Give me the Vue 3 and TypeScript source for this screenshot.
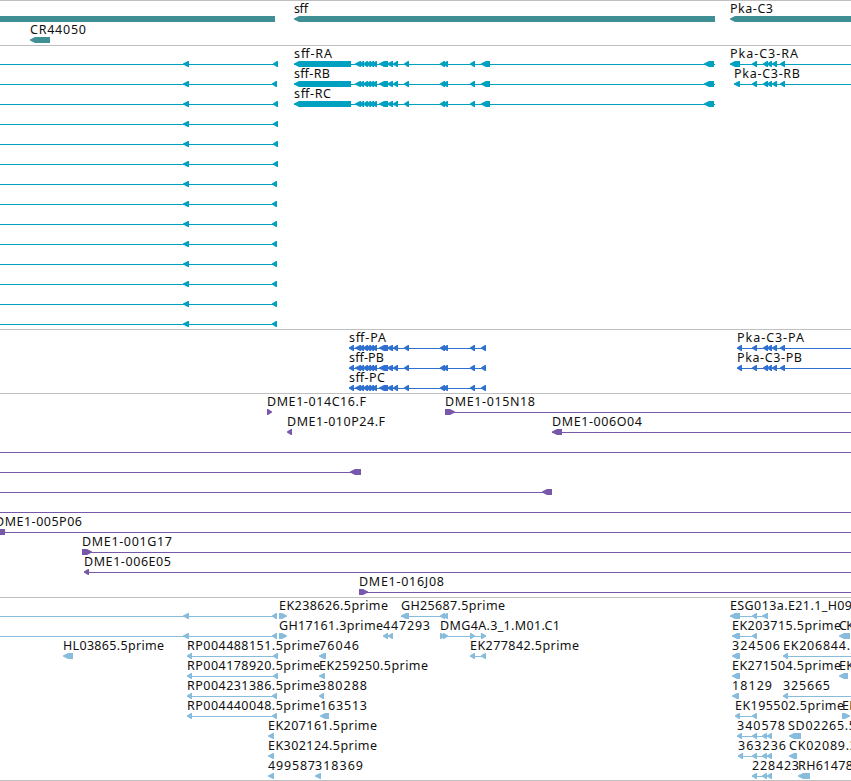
<template>
  <main class="browser">
    <section
      v-for="track in tracks"
      :key="track.id"
      class="browser__track"
      :class="`browser__track--${track.id}`"
    >
      <svg class="browser__canvas" :width="viewWidth" :height="track.height">
        <g v-for="(feature, index) in track.features" :key="index">
          <rect
            v-if="feature.line"
            class="browser__line"
            :x="feature.line[0]"
            :y="feature.y"
            :width="feature.line[1] - feature.line[0]"
            height="1"
          />
          <path
            v-for="(block, blockIndex) in feature.blocks"
            :key="blockIndex"
            class="browser__block"
            :d="blockPath(block, feature.y, feature.strand)"
          />
        </g>
        <g v-for="(feature, index) in track.features" :key="`label-${index}`">
          <text
            v-if="feature.label"
            class="browser__label"
            :x="feature.label.x"
            :y="feature.y - 6"
            :textLength="feature.label.width"
          >{{ feature.label.text }}</text>
        </g>
      </svg>
    </section>
  </main>
</template>

<script setup lang="ts">
type Span = [number, number]
type Strand = 'minus' | 'plus' | 'none'

interface Label {
  text: string
  x: number
  width: number
}

interface Feature {
  y: number
  strand: Strand
  blocks: Span[]
  line?: Span
  label?: Label
}

interface Track {
  id: string
  height: number
  features: Feature[]
}

const viewWidth = 851
const rowHeight = 20
const firstRow = 18

const rowY = (row: number) => firstRow + row * rowHeight

const label = (text: string, x: number, end: number): Label => ({ text, x, width: end - x })

const feature = (
  row: number,
  blocks: Span[],
  name?: Label,
  line?: Span,
  strand: Strand = 'minus'
): Feature => ({ y: rowY(row), strand, blocks, line, label: name })

// Block with an arrow head on the side given by the strand
const blockPath = ([start, end]: Span, y: number, strand: Strand) => {
  const head = Math.min(5, end - start - 1)
  if (strand === 'none') {
    return `M${start} ${y - 3}H${end}V${y + 3}H${start}Z`
  }
  if (strand === 'plus') {
    return `M${start} ${y - 3}H${end - head}L${end} ${y - 0.5}V${y + 0.5}L${end - head} ${y + 3}H${start}Z`
  }
  return `M${end} ${y - 3}H${start + head}L${start} ${y - 0.5}V${y + 0.5}L${start + head} ${y + 3}H${end}Z`
}

// Exons shared by the sff transcripts and proteins
const sffExons: Span[] = [
  [355, 361], [359, 364], [363, 368], [366, 371], [369, 374], [372, 377],
  [379, 388], [387, 393], [393, 398], [404, 409], [440, 445], [443, 448], [470, 475]
]
const pkaExons: Span[] = [[752, 757], [763, 768], [767, 772], [772, 777], [780, 785]]

const sffTranscript = (row: number, name: string, end: number) =>
  feature(row, [[294, 351], ...sffExons, [481, 490], [704, 714]], label(name, 294, end), [294, 715])

const sffProtein = (row: number, name: string, end: number) =>
  feature(row, [[349, 354], ...sffExons, [481, 486]], label(name, 349, end), [349, 486])

// Unlabelled transcripts running in from the left edge
const leftEnds = [278, 277, 278, 278, 278, 278, 277, 277, 277, 277, 277, 277, 277, 277]

const genes: Feature[] = [
  { y: 18, strand: 'none', blocks: [[0, 275]] },
  { y: 18, strand: 'minus', blocks: [[294, 715]], label: label('sff', 294, 308) },
  { y: 18, strand: 'minus', blocks: [[730, 860]], label: label('Pka-C3', 730, 773) },
  { y: 39, strand: 'minus', blocks: [[30, 50]], label: label('CR44050', 30, 86) }
]

const transcripts: Feature[] = [
  ...leftEnds.map((end, row) => feature(row, [[183, 189], [end - 5, end]], undefined, [0, end])),
  sffTranscript(0, 'sff-RA', 332),
  sffTranscript(1, 'sff-RB', 330),
  sffTranscript(2, 'sff-RC', 331),
  feature(0, [[730, 740], ...pkaExons], label('Pka-C3-RA', 730, 798), [730, 851]),
  feature(1, [[734, 740], ...pkaExons], label('Pka-C3-RB', 734, 800), [734, 851])
]

const proteins: Feature[] = [
  sffProtein(0, 'sff-PA', 386),
  sffProtein(1, 'sff-PB', 384),
  sffProtein(2, 'sff-PC', 385),
  feature(0, [[737, 742], ...pkaExons], label('Pka-C3-PA', 737, 804), [737, 851]),
  feature(1, [[737, 742], ...pkaExons], label('Pka-C3-PB', 737, 802), [737, 851])
]

const clones: Feature[] = [
  feature(0, [[267, 272]], label('DME1-014C16.F', 267, 366), undefined, 'plus'),
  feature(0, [[445, 455]], label('DME1-015N18', 445, 535), [445, 851], 'plus'),
  feature(1, [[287, 292]], label('DME1-010P24.F', 287, 385)),
  feature(1, [[552, 562]], label('DME1-006O04', 552, 642), [552, 851]),
  feature(2, [], undefined, [0, 851]),
  feature(3, [[350, 361]], undefined, [0, 361]),
  feature(4, [[542, 552]], undefined, [0, 552]),
  feature(5, [], undefined, [0, 851]),
  feature(6, [[0, 5]], label('DME1-005P06', -5, 82), [0, 851], 'none'),
  feature(7, [[82, 92]], label('DME1-001G17', 82, 172), [82, 851], 'plus'),
  feature(8, [[84, 89]], label('DME1-006E05', 84, 171), [84, 851]),
  feature(9, [[359, 368]], label('DME1-016J08', 359, 444), [359, 851], 'plus')
]

const ests: Feature[] = [
  feature(0, [[183, 189], [272, 277]], undefined, [0, 277]),
  feature(0, [[279, 287]], label('EK238626.5prime', 279, 388), undefined, 'plus'),
  feature(0, [[401, 409], [440, 445], [443, 448]], label('GH25687.5prime', 401, 505), [401, 448]),
  feature(0, [[730, 740], [752, 757], [762, 768]], label('ESG013a.E21.1_H09', 730, 852), [730, 768]),

  feature(1, [[183, 189], [272, 277]], undefined, [0, 277]),
  feature(1, [[279, 287]], label('GH17161.3prime', 279, 383), undefined, 'plus'),
  feature(1, [[383, 388], [388, 393]], label('447293', 383, 430), [383, 393]),
  feature(1, [[440, 445], [443, 448], [470, 475], [481, 486]], label('DMG4A.3_1.M01.C1', 440, 560), [440, 486], 'plus'),
  feature(1, [[732, 740], [752, 757]], label('EK203715.5prime', 732, 841), [732, 757]),
  feature(1, [[839, 850]], label('CK', 839, 854)),

  feature(2, [[63, 73]], label('HL03865.5prime', 63, 164)),
  feature(2, [[187, 192], [273, 278]], label('RP004488151.5prime', 187, 320), [187, 278]),
  feature(2, [[319, 326]], label('76046', 319, 359)),
  feature(2, [[470, 475], [481, 486]], label('EK277842.5prime', 470, 579), [470, 486]),
  feature(2, [[732, 740]], label('324506', 732, 780)),
  feature(2, [[783, 788]], label('EK206844.', 783, 850), [783, 851]),

  feature(3, [[187, 192], [273, 278]], label('RP004178920.5prime', 187, 320), [187, 278]),
  feature(3, [[319, 325]], label('EK259250.5prime', 319, 428)),
  feature(3, [[732, 740]], label('EK271504.5prime', 732, 841)),
  feature(3, [[839, 848]], label('EK', 839, 854)),

  feature(4, [[187, 192], [272, 277]], label('RP004231386.5prime', 187, 320), [187, 277]),
  feature(4, [[319, 324]], label('380288', 319, 367)),
  feature(4, [[732, 739]], label('18129', 732, 772)),
  feature(4, [[783, 788]], label('325665', 783, 830), [783, 851]),

  feature(5, [[187, 192], [272, 277]], label('RP004440048.5prime', 187, 320), [187, 277]),
  feature(5, [[320, 329]], label('163513', 320, 367)),
  feature(5, [[735, 740], [752, 757]], label('EK195502.5prime', 735, 844), [735, 757]),
  feature(5, [[842, 850]], label('EK', 842, 857), undefined, 'plus'),

  feature(6, [[268, 274]], label('EK207161.5prime', 268, 377)),
  feature(6, [[737, 742], [752, 757], [762, 767], [767, 772]], label('340578', 737, 785), [737, 772]),
  feature(6, [[789, 801]], label('SD02265.5', 788, 856)),

  feature(7, [[268, 274]], label('EK302124.5prime', 268, 377)),
  feature(7, [[738, 743], [752, 757], [762, 767], [767, 772]], label('363236', 738, 786), [738, 772]),
  feature(7, [[789, 797]], label('CK02089.3', 789, 857)),

  feature(8, [[268, 274]], label('499587', 268, 315)),
  feature(8, [[315, 321]], label('318369', 315, 363)),
  feature(8, [[752, 757], [762, 767], [767, 772]], label('228423', 752, 799), [752, 772]),
  feature(8, [[798, 810]], label('RH61478', 798, 853))
]

const tracks: Track[] = [
  { id: 'gene', height: 44, features: genes },
  { id: 'transcript', height: 283, features: transcripts },
  { id: 'protein', height: 63, features: proteins },
  { id: 'clone', height: 203, features: clones },
  { id: 'est', height: 182, features: ests }
]
</script>

<style>
body {
  margin: 0;
  background: #ffffff;
}
</style>

<style scoped>
.browser {
  width: 851px;
  height: 781px;
  box-sizing: border-box;
  border-bottom: 1px solid #c0c0c0;
  overflow: hidden;
}

.browser__track {
  border-top: 1px solid #c0c0c0;
}

.browser__track--gene {
  color: #408f95;
}

.browser__track--transcript {
  color: #00a0c0;
}

.browser__track--protein {
  color: #3070d0;
}

.browser__track--clone {
  color: #7858a8;
}

.browser__track--est {
  color: #88bcdc;
}

.browser__canvas {
  display: block;
}

.browser__line {
  fill: currentColor;
  shape-rendering: crispEdges;
}

.browser__block {
  fill: currentColor;
}

.browser__label {
  fill: #101010;
  font-family: "Noto Sans", "Open Sans", sans-serif;
  font-size: 12.5px;
}
</style>
